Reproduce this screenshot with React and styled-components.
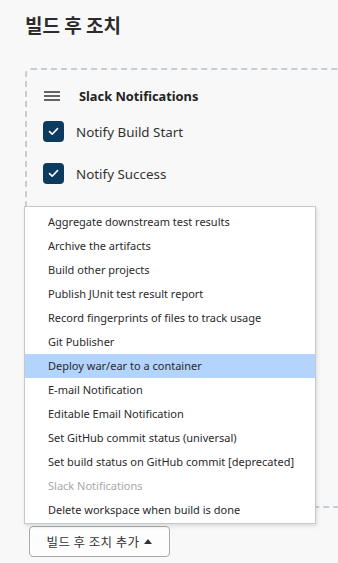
import React from "react";
import styled, { createGlobalStyle } from "styled-components";

const GlobalStyle = createGlobalStyle`
  html, body {
    margin: 0;
    padding: 0;
    background: #f8f8f8;
    overflow: hidden;
  }
  body {
    font-family: "Noto Sans", "Noto Sans CJK KR", sans-serif;
    color: #333;
  }
`;

const Page = styled.div`
  width: 338px;
  height: 563px;
  padding-left: 25px;
  box-sizing: border-box;
`;

const Title = styled.h2`
  margin: 0;
  padding-top: 11px;
  height: 28px;
  font-family: "Noto Sans CJK KR", sans-serif;
  font-size: 19px;
  font-weight: 700;
  line-height: 28px;
  color: #2b2b2b;
`;

const Card = styled.div`
  margin-top: 29px;
  width: 360px;
  height: 440px;
  box-sizing: border-box;
  border: 2px dashed #c6ced4;
  border-radius: 6px;
  padding: 14px 0 0 16px;
`;

const CardHeader = styled.div`
  display: flex;
  align-items: center;
  height: 24px;
  gap: 19px;
`;

const Handle = styled.svg`
  width: 16px;
  height: 10px;
  margin-left: 1px;
`;

const CardTitle = styled.span`
  font-size: 12.8px;
  font-weight: 700;
  color: #222;
`;

const Option = styled.label`
  display: flex;
  align-items: center;
  gap: 12px;
  margin-top: ${(p) => p.$top}px;
  font-size: 13.4px;
  color: #333;
`;

const Box = styled.span`
  width: 21px;
  height: 21px;
  border-radius: 4px;
  background: #0d3b5f;
  display: flex;
  align-items: center;
  justify-content: center;
`;

const ButtonWrap = styled.div`
  position: relative;
  margin: 18px 0 0 4px;
  width: 141px;
  height: 31px;
`;

const AddButton = styled.button`
  width: 141px;
  height: 31px;
  box-sizing: border-box;
  border: 1.5px solid #a7abae;
  border-radius: 4px;
  background: #fdfdfd;
  font-family: "Noto Sans CJK KR", sans-serif;
  font-size: 12.5px;
  letter-spacing: 0.4px;
  color: #333;
  display: flex;
  align-items: center;
  justify-content: center;
  gap: 5px;
  padding: 0;
`;

const Menu = styled.ul`
  position: absolute;
  left: -5px;
  bottom: calc(100% + 2px);
  width: 292px;
  margin: 0;
  padding: 3px 0 1px;
  box-sizing: border-box;
  list-style: none;
  background: #fff;
  border: 1px solid #c3c9cd;
  box-shadow: 1px 2px 4px rgba(0, 0, 0, 0.12);
`;

const Item = styled.li`
  height: 24px;
  line-height: 24px;
  padding-left: 23px;
  font-size: 11px;
  white-space: nowrap;
  color: ${(p) => (p.$disabled ? "#a8a8a8" : "#2a2a2a")};
  background: ${(p) => (p.$active ? "#b3d4fc" : "transparent")};
`;

const items = [
  "Aggregate downstream test results",
  "Archive the artifacts",
  "Build other projects",
  "Publish JUnit test result report",
  "Record fingerprints of files to track usage",
  "Git Publisher",
  "Deploy war/ear to a container",
  "E-mail Notification",
  "Editable Email Notification",
  "Set GitHub commit status (universal)",
  "Set build status on GitHub commit [deprecated]",
  "Slack Notifications",
  "Delete workspace when build is done",
];

function Check() {
  return (
    <Box>
      <svg width="11" height="9" viewBox="0 0 11 9">
        <path d="M1.5 4.6 L4.2 7.2 L9.5 1.6" fill="none" stroke="#fff" strokeWidth="1.6" strokeLinecap="round" strokeLinejoin="round" />
      </svg>
    </Box>
  );
}

export default function App() {
  return (
    <Page>
      <GlobalStyle />
      <Title>빌드 후 조치</Title>
      <Card>
        <CardHeader>
          <Handle viewBox="0 0 16 10">
            <path d="M0 1h16M0 5h16M0 9h16" stroke="#333" strokeWidth="1.3" />
          </Handle>
          <CardTitle>Slack Notifications</CardTitle>
        </CardHeader>
        <Option $top={13}>
          <Check />
          Notify Build Start
        </Option>
        <Option $top={21}>
          <Check />
          Notify Success
        </Option>
      </Card>
      <ButtonWrap>
        <Menu>
          {items.map((label, i) => (
            <Item key={i} $active={i === 6} $disabled={label === "Slack Notifications"}>
              {label}
            </Item>
          ))}
        </Menu>
        <AddButton>
          빌드 후 조치 추가
          <svg width="8" height="5" viewBox="0 0 8 5">
            <path d="M0 5 L4 0 L8 5 Z" fill="#333" />
          </svg>
        </AddButton>
      </ButtonWrap>
    </Page>
  );
}
